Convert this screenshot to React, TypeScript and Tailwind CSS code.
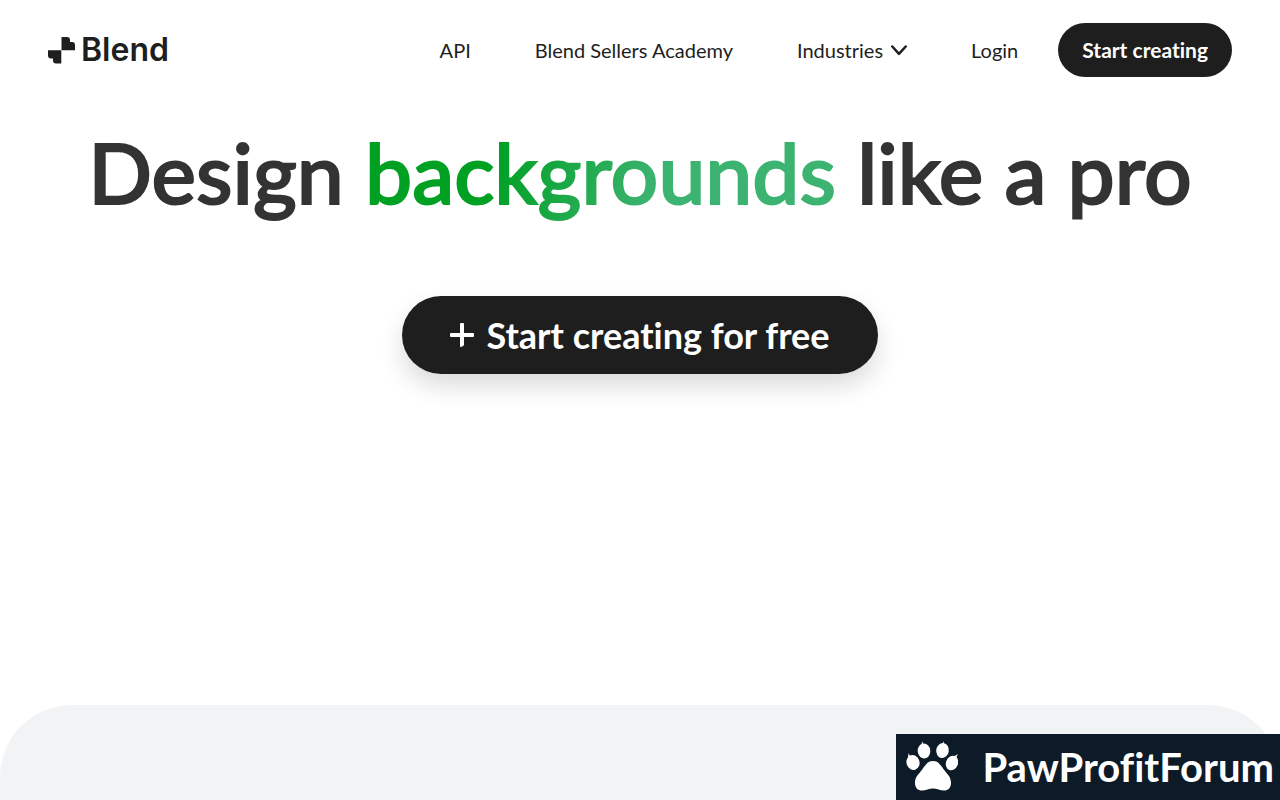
import React from 'react';

const navLinks = [
  { label: 'API', href: '#api' },
  { label: 'Blend Sellers Academy', href: '#academy' },
];

function BlendMark() {
  return (
    <svg className="h-[27px] w-[27px] shrink-0" viewBox="0 0 27 27" fill="#1e1e1e" aria-hidden="true">
      <path d="M13.500 0h5.500q3 0 3 3v2h2q3 0 3 3v5.200H13.500z" />
      <path d="M0 13.200h13.300V26.500H8q-3 0-3-3v-2H3q-3 0-3-3z" />
    </svg>
  );
}

function Paw() {
  return (
    <svg className="h-[52px] w-[52px] shrink-0" viewBox="0 0 52 52" fill="#fff" aria-hidden="true">
      <ellipse cx="7" cy="21.500" rx="6.500" ry="7.500" transform="rotate(-18 7 21.500)" />
      <ellipse cx="18" cy="10" rx="6.300" ry="7.500" transform="rotate(-5 18 10)" />
      <ellipse cx="36.500" cy="9.500" rx="6.300" ry="7.500" transform="rotate(8 36.5 9.5)" />
      <ellipse cx="46" cy="22" rx="6" ry="7.500" transform="rotate(22 46 22)" />
      <path d="M2 17 2.500 12 4.500 16zM15.500 5 16 0 17.500 4zM36 4 38 0 38 5zM47 16 52 13 49.500 18z" />
      <path d="M27 20c-6 0-8 5-12 10-3 4-6 6-6 12 0 5 3 7.500 7 7.500 4 0 7-2 11-2s7 2 11 2c4 0 7-2.500 7-7.500 0-6-3-8-6-12-4-5-6-10-12-10z" />
    </svg>
  );
}

function Header() {
  return (
    <header className="flex h-[100px] items-center justify-between px-12">
      <a href="#home" className="flex items-center gap-1.5">
        <BlendMark />
        <span className="font-['Inter',sans-serif] text-[32px] leading-8 font-semibold">Blend</span>
      </a>
      <nav className="flex items-center gap-10 text-xl">
        <div className="flex items-center gap-16">
          {navLinks.map(link => (
            <a key={link.label} href={link.href}>{link.label}</a>
          ))}
          <button type="button" className="flex items-center gap-2">
            Industries
            <svg className="h-4 w-4" viewBox="0 0 16 16" fill="none" stroke="#1e1e1e" strokeWidth="2.500" strokeLinecap="round" strokeLinejoin="round" aria-hidden="true">
              <path d="M1.300 4.500 8 11.800l6.700-7.300" />
            </svg>
          </button>
          <a href="#login">Login</a>
        </div>
        <button type="button" className="h-[54px] rounded-full bg-[#1e1e1e] px-6 text-[21px] font-bold text-white">
          Start creating
        </button>
      </nav>
    </header>
  );
}

export default function App() {
  return (
    <div className="flex min-h-screen flex-col bg-white font-['Lato',sans-serif] text-[#1e1e1e] [font-variant-ligatures:none]">
      <Header />
      <main className="flex grow flex-col">
        <section className="flex flex-col items-center pt-5">
          <h1 className="text-center text-[84px] leading-[104px] font-medium text-[#333] [-webkit-text-stroke:2px]">
            Design{' '}
            <span className="bg-[linear-gradient(105deg,#00a023_28%,#3cb371_62%)] bg-clip-text text-transparent">
              backgrounds
            </span>{' '}
            like a pro
          </h1>
          <button
            type="button"
            className="mt-[72px] flex h-[78px] items-center gap-3 rounded-full bg-[#1e1e1e] px-12 text-[36px] font-bold text-white shadow-[0_12px_24px_rgba(0,0,0,0.14)]"
          >
            <svg className="h-6 w-6" viewBox="0 0 24 24" fill="#fff" aria-hidden="true">
              <path d="M11 0h2q1 0 1 1v9h9q1 0 1 1v2q0 1-1 1h-9v8q-1 2-4 2V14H1q-1 0-1-1v-2q0-1 1-1h9V1q0-1 1-1z" />
            </svg>
            Start creating for free
          </button>
        </section>
        <section className="mt-[331px] min-h-24 grow rounded-t-[72px] bg-[#f2f3f5]" />
      </main>
      <a
        href="#forum"
        className="fixed right-0 bottom-0 flex h-[66px] items-center gap-6 bg-[#0c1b27] pr-1.5 pl-2.5 text-[40px] font-bold text-white"
      >
        <Paw />
        PawProfitForum
      </a>
    </div>
  );
}
